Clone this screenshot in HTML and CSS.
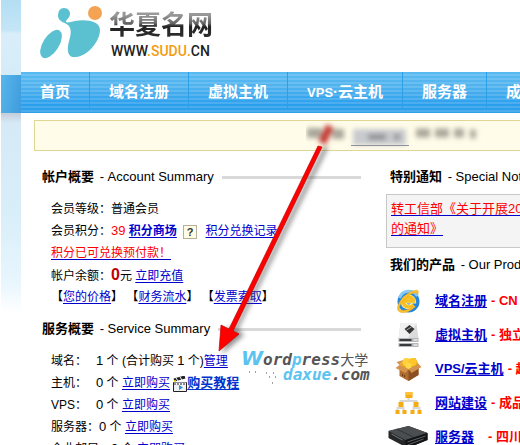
FILE: index.html
```html
<!DOCTYPE html>
<html lang="zh-CN">
<head>
<meta charset="utf-8">
<title>华夏名网</title>
<link rel="stylesheet" href="styles.css">
</head>
<body>
<div class="page">
  <div class="edge"><div class="edge-sky"></div><div class="edge-nav"></div><div class="edge-fade"></div></div>
  <div class="main">
    <header class="header">
      <svg class="mark" width="64" height="56" viewBox="0 0 64 56" aria-hidden="true">
        <g fill="#5bc0d0">
          <path d="M18 10C18 5 20 2 24 2C28 2 30 5 30 8C30 12 26 13 26 16C27 17 31 16 35 15C46 13 60 15 60 24C60 35 48 50 36 51C30 52 27 48 28 40C29 33 33 26 29 20C27 17 18 16 18 10Z"/>
          <ellipse cx="11" cy="38" rx="8" ry="16" transform="rotate(32 11 38)"/>
        </g>
        <circle cx="55" cy="7" r="7" fill="#f3a352"/>
      </svg>
      <div class="brand">
        <div class="brand-name">华夏名网</div>
        <div class="brand-url">WWW<span>.SUDU.</span>CN</div>
      </div>
    </header>
    <nav class="nav">
      <a href="#">首页</a><a href="#">域名注册</a><a href="#">虚拟主机</a><a href="#"><span>VPS</span>·云主机</a><a href="#">服务器</a><a href="#">成品</a>
    </nav>
    <div class="content">
      <div class="notice">
        <svg width="180" height="29" viewBox="0 0 180 29" aria-hidden="true">
          <defs><filter id="soft" x="-20%" y="-60%" width="140%" height="220%"><feGaussianBlur stdDeviation="2.5"/></filter></defs>
          <g filter="url(#soft)">
            <path d="M1 12H16M26 13H38" stroke="#8c8a80" stroke-width="10" opacity=".75"/>
            <path d="M47 16H100" stroke="#c9cace" stroke-width="16"/>
            <path d="M62 16H80M88 16H94" stroke="#8f9094" stroke-width="6"/>
            <path d="M110 12H124M129 12H143M148 12H158M164 13H170" stroke="#aaa89b" stroke-width="9"/>
            <path d="M24 5L16 22" stroke="#c43a34" stroke-width="8"/>
          </g>
          <path d="M45 24.500H103" stroke="#8f929c"/>
        </svg>
      </div>
      <div class="columns">
        <div class="account">
          <h2><span><b>帐户概要</b> - Account Summary</span></h2>
          <div class="rows">
            <p>会员等级：普通会员</p>
            <p>会员积分：<span class="points">39</span> <a href="#"><b>积分商场</b></a> <button class="help" aria-label="帮助">?</button> <a href="#">积分兑换记录</a></p>
            <p><a class="red" href="#">积分已可兑换预付款！</a></p>
            <p>帐户余额：<b class="balance">0</b>元 <a href="#">立即充值</a></p>
            <p>【<a href="#">您的价格</a>】 【<a href="#">财务流水</a>】 【<a href="#">发票索取</a>】</p>
          </div>
          <h2><span><b>服务概要</b> - Service Summary</span></h2>
          <div class="rows services">
            <p><span class="label">域名：</span><i>1</i> 个 (合计购买 <i>1</i> 个)<a href="#">管理</a></p>
            <p><span class="label">主机：</span><i>0</i> 个 <a href="#">立即购买</a>
              <svg class="clip" width="14" height="16" viewBox="0 0 14 16" aria-hidden="true"><path d="M.5 6.500H13.500V15.500H.5Z" fill="#eef2f5" stroke="#222"/><path d="M1 4L12 1" stroke="#222" stroke-width="3"/><path d="M3 2L5 5M7 1L9 4M1 7H13" stroke="#fff"/><path d="M1 8H13" stroke="#222" stroke-dasharray="2 1"/><path d="M6 9L10 11.500L6 14Z" fill="#3292c8"/><circle cx="2" cy="5" r="1" fill="#ede000"/></svg><a class="guide" href="#"><b>购买教程</b></a></p>
            <p><span class="label">VPS：</span><i>0</i> 个 <a href="#">立即购买</a></p>
            <p>服务器：<i>0</i> 个 <a href="#">立即购买</a></p>
            <p>企业邮局：<i>0</i> 个 <a href="#">立即购买</a></p>
          </div>
        </div>
        <div class="side">
          <h2><span><b>特别通知</b> - Special Notice</span></h2>
          <div class="bulletin"><a class="red" href="#">转工信部《关于开展2013<br>的通知》</a></div>
          <h2><span><b>我们的产品</b> - Our Products</span></h2>
          <ul class="products">
            <li>
              <svg width="26" height="26" viewBox="0 0 26 26" aria-hidden="true"><circle cx="13" cy="13.500" r="11" fill="#2585dd"/><path d="M4 10A10 10 0 0 1 22 8" fill="none" stroke="#8acbf4" stroke-width="3"/><path d="M18 17C14 20.500 8 19 8 14C8 8 17.500 7.500 18 13H8" fill="none" stroke="#fff0a0" stroke-width="5"/><path d="M18 17C14 20.500 8 19 8 14C8 8 17.500 7.500 18 13H8" fill="none" stroke="#f8be22" stroke-width="3.500"/><path d="M3 23C-1 18 9 5 18 3C22 1 24 3 22 7C22 4 19 4 14 7C7 12 3 18 4 21C6 24 14 22 20 18C14 25 6 26 3 23Z" fill="#f9c32b" stroke="#eea21a" stroke-width=".6"/></svg>
              <a href="#">域名注册</a><span>- CN 买</span>
            </li>
            <li>
              <svg width="22" height="26" viewBox="0 0 22 26" aria-hidden="true"><path d="M3 1H19L21 17H1Z" fill="#dadbdd"/><path d="M3 1H19L10 17H1Z" fill="#f0f0f1"/><path d="M7 7L12 3L17 7L12 12Z" fill="#333"/><path d="M9 8L14 5" stroke="#aaa"/><path d="M1 16H21V20H1ZM1 21H21V25H1Z" fill="#b5b8bb"/><path d="M2 18H14M2 23H14" stroke="#393c3e" stroke-width="2"/><path d="M16 18H20M16 23H20" stroke="#fff"/></svg>
              <a href="#">虚拟主机</a><span>- 独立</span>
            </li>
            <li>
              <svg width="26" height="24" viewBox="0 0 26 24" aria-hidden="true"><path d="M4 8L13 12L23 7V18L13 24L4 19Z" fill="#b06c2c"/><path d="M13 12L23 7V18L13 24Z" fill="#895024"/><path d="M4 8L8 3L20 1L23 7L13 13Z" fill="#edab16"/><circle cx="11" cy="5" r="4" fill="#ffd13e"/><circle cx="17" cy="5" r="4" fill="#ffc629"/><circle cx="13" cy="9" r="3" fill="#ffd84d"/><path d="M4 8L0 11L10 16L13 12ZM23 7L26 10L16 16L13 12ZM4 8L1 5L8 3Z" fill="#d59350"/><path d="M7 19V17M9 20V18" stroke="#6d411d"/></svg>
              <a href="#">VPS/云主机</a><span>- 超</span>
            </li>
            <li>
              <svg width="28" height="22" viewBox="0 0 28 22" aria-hidden="true"><path d="M14 6V9M6 12V9H22V12M3 19V16H9V19M19 19V16H25V19" fill="none" stroke="#d7d7d7" stroke-width="2"/><path d="M11 0H18V6H11ZM4 10H9V15H4ZM19 10H24V15H19ZM1 18H5V22H1ZM8 18H12V22H8ZM16 18H20V22H16ZM23 18H27V22H23Z" fill="#f5ac13"/><path d="M11 0H18V3H11Z" fill="#ffc13c"/></svg>
              <a href="#">网站建设</a><span>- 成品</span>
            </li>
            <li>
              <svg width="40" height="22" viewBox="0 0 40 22" aria-hidden="true"><path d="M0 5L20 0L39 7V14L19 22L0 12Z" fill="#252729"/><path d="M0 5L20 0L39 7L17 14Z" fill="#4b4e51"/><path d="M8 3L25 11" stroke="#333"/><path d="M17 14L39 7V14L19 22H17Z" fill="#111315"/><path d="M19 16L37 10M19 19L35 13" stroke="#5e6163"/><path d="M3 8L14 14" stroke="#777"/></svg>
              <a href="#">服务器</a><span class="shift">- 四川</span>
            </li>
          </ul>
        </div>
      </div>
    </div>
  </div>
  <div class="watermark">
    <div class="wm-top"><em class="wm-cap">W</em>ord<em>p</em>ress<span>大学</span></div>
    <div class="wm-bottom"><em>daxue</em>.com</div>
    <svg class="dots" width="28" height="16" viewBox="0 0 28 16" aria-hidden="true"><path d="M0 2h1M6 2h1M17 3h1M24 3h1M20 7h1M26 7h1M23 13h1" stroke="#444"/></svg>
  </div>
  <svg class="arrow" width="140" height="240" viewBox="0 0 140 240" aria-hidden="true">
    <defs><filter id="shade" x="-20%" y="-10%" width="150%" height="120%"><feGaussianBlur stdDeviation="2.500"/></filter></defs>
    <path d="M118 28L28 209L34 215L12 234L18 207L24 208L114 26Z" fill="#555" opacity=".65" filter="url(#shade)"/>
    <path d="M108 26L112 27L23 211L29 214L9 231L11 205L19 209Z" fill="#fe0000" stroke="#c30000" stroke-width=".7"/>
  </svg>
</div>
</body>
</html>
```
FILE: styles.css
```css
* { box-sizing: border-box; }
body {
  margin: 0;
  background: #fff;
  color: #000;
  font: 12px/22px "Liberation Sans", "Noto Sans CJK SC", sans-serif;
  text-spacing-trim: space-all;
}
.page {
  position: relative;
  display: flex;
  height: 100vh;
  overflow: hidden;
}
.edge { flex: none; width: 20px; margin-left: 1px; }
.edge-sky { height: 75px; background: linear-gradient(#b4def3, #c3e5f6 40%, #d9eef9 45%, #d5ecf8); }
.edge-nav { height: 38px; background: linear-gradient(100deg, #58b7ec, #3f9bdc); }
.edge-fade { height: 200px; background: linear-gradient(#c6ccda, #d5eaf6 5%, #d8eef9 50%, #e8f6fd 85%, #fff); }
.main { flex: 1; min-width: 0; overflow: hidden; }
.header { display: flex; height: 72px; padding: 6px 0 0 19px; }
.brand { padding: 2px 0 0 5px; }
.brand-name {
  font-size: 26px;
  line-height: 34px;
  font-weight: 700;
  color: transparent;
  background: linear-gradient(#999 20%, #666 45%, #222 55%, #333);
  background-clip: text;
  -webkit-background-clip: text;
}
.brand-url { padding-left: 2px; color: #222; font: 500 14px/18px Roboto, sans-serif; }
.brand-url span { color: #f39c12; }
.nav {
  display: flex;
  height: 41px;
  padding-bottom: 4px;
  background: repeating-linear-gradient(transparent 0 2px, rgba(255, 255, 255, .14) 2px 4px), linear-gradient(#5abbf2, #4fb2ee 35%, #2b9fed 80%, #2f9fe9);
}
.nav a {
  flex: none;
  padding: 0 19px;
  border-right: 1px solid #2ba0e6;
  color: #fff;
  font-size: 15px;
  line-height: 40px;
  font-weight: 700;
  text-decoration: none;
  white-space: nowrap;
}
.nav span { font-size: 13px; }
.content { padding: 7px 0 0 13px; }
.notice {
  height: 31px;
  padding-left: 271px;
  border: 1px solid #dfd791;
  border-right: 0;
  background: #fffce9;
}
.notice svg { display: block; }
.columns { display: flex; gap: 25px; padding: 15px 0 0 8px; }
.account { flex: none; width: 319px; }
.side { flex: 1; min-width: 0; white-space: nowrap; }
h2 {
  display: flex;
  align-items: center;
  gap: 8px;
  margin: 0;
  font-size: 13px;
  line-height: 22px;
  font-weight: 400;
  white-space: nowrap;
}
h2 b { margin-right: 2px; }
.account h2::after { content: ""; flex: 1; height: 3px; background: #d9d9d9; }
.side h2 { padding-left: 4px; }
.rows { padding: 10px 0 10px 9px; }
.rows p { height: 22px; margin: 0; white-space: nowrap; }
.rows i { font-size: 13px; font-style: normal; }
.label { display: inline-block; width: 45px; }
a { color: #0000cc; text-decoration: underline; text-underline-offset: 2px; }
.red { color: #f00; text-decoration-color: #0000cc; }
.points { color: #f00; font-size: 13px; }
.balance { color: #c00000; font-size: 16px; }
.help {
  width: 14px;
  height: 14px;
  margin: 0 5px 0 3px;
  padding: 0;
  border: 1px solid #b5b09c;
  background: #fffde8;
  color: #333;
  font: 700 11px/12px "Liberation Sans", sans-serif;
  vertical-align: middle;
}
.clip { vertical-align: middle; }
.guide { color: #0033cc; font-size: 13px; }
.bulletin {
  height: 54px;
  margin: 6px 0;
  padding: 4px;
  border: 1px solid #c8c8c8;
  border-right: 0;
  background: #f4f4f4;
  font-size: 13px;
  line-height: 20px;
}
.products { margin: 0; padding: 8px 0 0; list-style: none; font-size: 13px; font-weight: 700; }
.products li { display: flex; align-items: center; gap: 4px; height: 34px; }
.products li > svg { flex: none; width: 45px; }
.products span { color: #f00; }
.products .shift { padding-left: 10px; }
.watermark {
  position: absolute;
  left: 241px;
  top: 349px;
  color: #555;
  font: italic 700 16px/18px "DejaVu Sans Mono", monospace;
}
.watermark em { color: #5cc3f0; }
.watermark .wm-cap { font: italic 700 20px/18px "DejaVu Sans", sans-serif; }
.wm-top { height: 18px; }
.wm-top span { font: 400 14px/18px "Noto Sans CJK SC", sans-serif; }
.wm-bottom { padding-left: 42px; line-height: 16px; }
.dots { position: absolute; left: 8px; top: 21px; }
.arrow { position: absolute; left: 210px; top: 120px; }
```
